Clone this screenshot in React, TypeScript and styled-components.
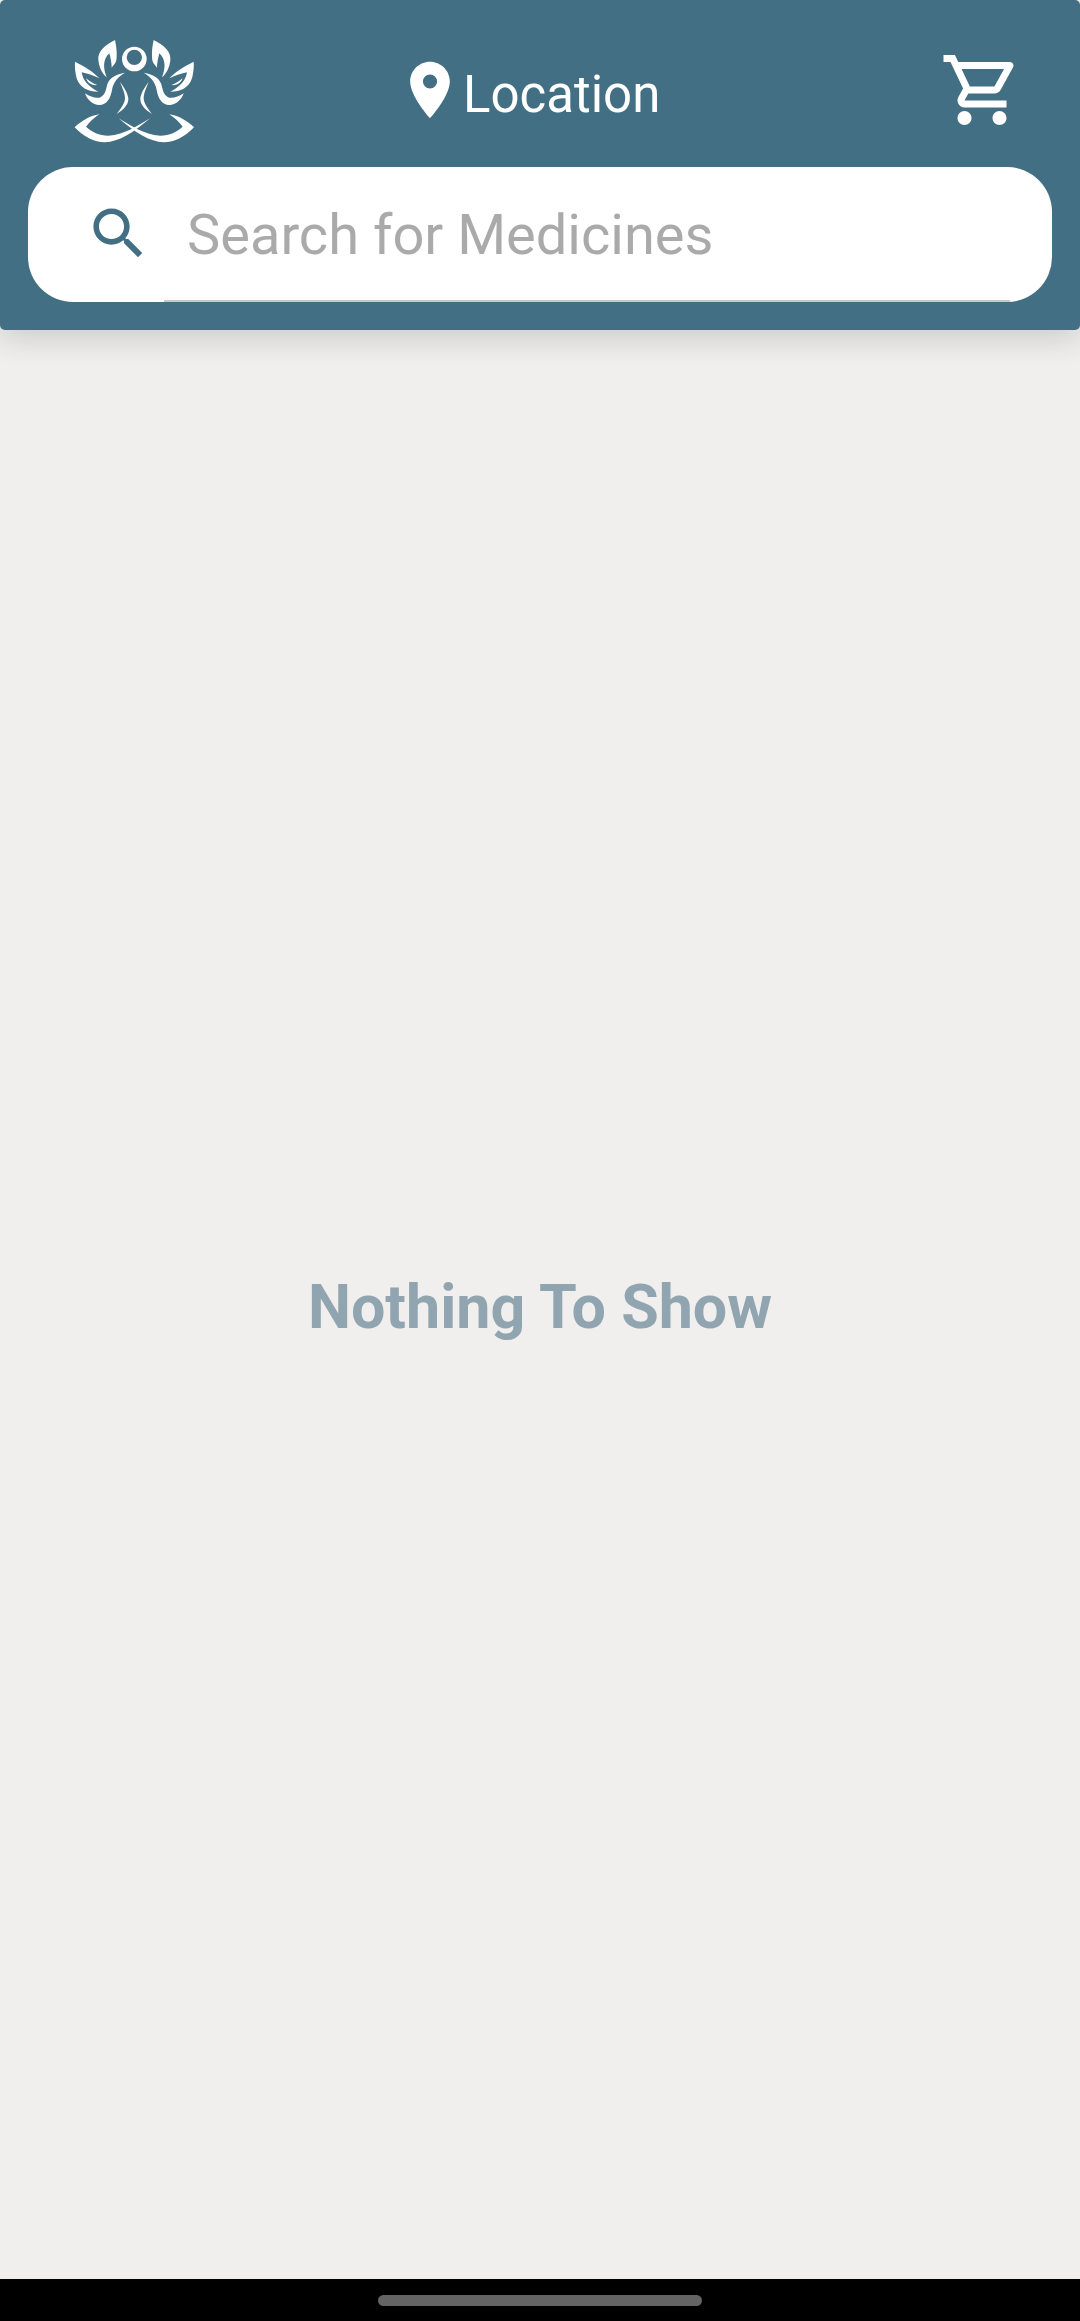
import React from 'react';
import styled, { createGlobalStyle } from 'styled-components';

const GlobalStyle = createGlobalStyle`
  html, body {
    margin: 0;
    padding: 0;
    background: #f0efee;
    font-family: Roboto, "Liberation Sans", sans-serif;
  }
`;

const Screen = styled.div`
  width: 1080px;
  height: 2321px;
  display: flex;
  flex-direction: column;
  overflow: hidden;
  background: #f0efee;
`;

const Header = styled.header`
  height: 330px;
  flex: none;
  box-sizing: border-box;
  padding: 35px 28px 28px;
  display: flex;
  flex-direction: column;
  justify-content: space-between;
  background: #436f84;
  border-radius: 5px;
  box-shadow: 0 10px 30px rgba(0, 0, 0, 0.14);
`;

const TopRow = styled.div`
  height: 110px;
  display: flex;
  align-items: center;
  padding: 0 28px 0 42px;
`;

const Logo = styled.svg`
  width: 130px;
  height: 110px;
  flex: none;
  fill: #fff;
`;

const LocationButton = styled.div`
  display: flex;
  align-items: center;
  margin-left: 196px;
  color: #fff;
  font-size: 51px;
`;

const PinIcon = styled.svg`
  width: 68px;
  height: 68px;
  flex: none;
  fill: #fff;
`;

const LocationLabel = styled.span`
  margin-left: -1px;
  padding-top: 8px;
`;

const CartIcon = styled.svg`
  width: 84px;
  height: 84px;
  flex: none;
  margin-left: auto;
  fill: #fff;
`;

const SearchBar = styled.div`
  height: 135px;
  display: flex;
  align-items: center;
  background: #fff;
  border-radius: 45px;
  padding-left: 57px;
`;

const SearchIcon = styled.svg`
  width: 67px;
  height: 67px;
  flex: none;
  margin-top: -2px;
  fill: #436f84;
`;

const SearchField = styled.div`
  align-self: stretch;
  flex: 1;
  display: flex;
  align-items: center;
  margin: 0 42px 0 12px;
  padding: 3px 0 0 23px;
  border-bottom: 2px solid #c9c9c9;
  color: #aaaaaa;
  font-size: 56px;
`;

const Content = styled.main`
  flex: 1;
  display: flex;
  align-items: center;
  justify-content: center;
  padding-top: 4px;
`;

const EmptyText = styled.div`
  color: #90a5b0;
  font-size: 61px;
  font-weight: 700;
`;

const NavBar = styled.div`
  height: 42px;
  flex: none;
  box-sizing: border-box;
  padding-top: 16px;
  display: flex;
  justify-content: center;
  background: #000;
`;

const HomePill = styled.div`
  width: 324px;
  height: 11px;
  border-radius: 6px;
  background: #636363;
`;

// one side of the meditating figure, drawn twice for the mirror image
const LogoHalf = () => (
  <>
    <path d="M135 15C105 30 82 50 85 75C87 95 95 115 110 127C100 100 97 75 118 55C122 70 125 85 125 98C130 90 140 85 140 65C141 45 138 30 135 15Z" />
    <path d="M15 80C45 95 70 110 88 130C70 122 50 115 35 112C38 135 55 155 85 170C55 170 30 160 20 130C15 110 14 95 15 80Z" />
    <path d="M48 130C60 140 72 148 82 150C70 152 55 148 48 130Z" />
    <path d="M165 113C135 118 115 130 110 155C106 175 98 185 88 188C75 190 60 185 45 175C52 195 68 210 88 210C110 210 122 190 126 165C130 140 145 125 165 113Z" />
    <path d="M150 140C160 155 172 170 175 190C176 210 160 225 140 237C152 222 165 205 165 190C165 172 155 155 150 140Z" />
    <path d="M88 238C58 243 35 257 14 277C40 305 72 322 105 322C145 322 195 290 240 250C205 270 165 300 115 302C88 302 64 290 48 275C60 260 72 248 88 238Z" />
  </>
);

export default function App() {
  return (
    <Screen>
      <GlobalStyle />
      <Header>
        <TopRow>
          <Logo viewBox="0 0 390 330">
            <path
              fillRule="evenodd"
              d="M193 35a37 37 0 1 0 0 74a37 37 0 1 0 0-74zM193 44a23 23 0 1 1 0 46a23 23 0 1 1 0-46z"
            />
            <LogoHalf />
            <g transform="translate(386 0) scale(-1 1)">
              <LogoHalf />
            </g>
          </Logo>
          <LocationButton>
            <PinIcon viewBox="0 0 24 24">
              <path d="M12 2C8.13 2 5 5.13 5 9c0 5.25 7 13 7 13s7-7.75 7-13c0-3.87-3.13-7-7-7zm0 9.5a2.5 2.5 0 0 1 0-5 2.5 2.5 0 0 1 0 5z" />
            </PinIcon>
            <LocationLabel>Location</LocationLabel>
          </LocationButton>
          <CartIcon viewBox="0 0 24 24">
            <path d="M15.55 13c.75 0 1.41-.41 1.75-1.03l3.58-6.49A.996.996 0 0 0 20.01 4H5.21l-.94-2H1v2h2l3.6 7.59-1.35 2.44C4.52 15.37 5.48 17 7 17h12v-2H7l1.1-2h7.45zM6.16 6h12.15l-2.76 5H8.53L6.16 6zM7 18c-1.1 0-1.99.9-1.99 2S5.9 22 7 22s2-.9 2-2-.9-2-2-2zm10 0c-1.1 0-1.99.9-1.99 2s.89 2 1.99 2 2-.9 2-2-.9-2-2-2z" />
          </CartIcon>
        </TopRow>
        <SearchBar>
          <SearchIcon viewBox="0 0 24 24">
            <path d="M15.5 14h-.79l-.28-.27C15.41 12.59 16 11.11 16 9.5 16 5.91 13.09 3 9.5 3S3 5.91 3 9.5 5.91 16 9.5 16c1.61 0 3.09-.59 4.23-1.57l.27.28v.79l5 4.99L20.49 19l-4.99-5zm-6 0C7.01 14 5 11.99 5 9.5S7.01 5 9.5 5 14 7.01 14 9.5 11.99 14 9.5 14z" />
          </SearchIcon>
          <SearchField>Search for Medicines</SearchField>
        </SearchBar>
      </Header>
      <Content>
        <EmptyText>Nothing To Show</EmptyText>
      </Content>
      <NavBar>
        <HomePill />
      </NavBar>
    </Screen>
  );
}
